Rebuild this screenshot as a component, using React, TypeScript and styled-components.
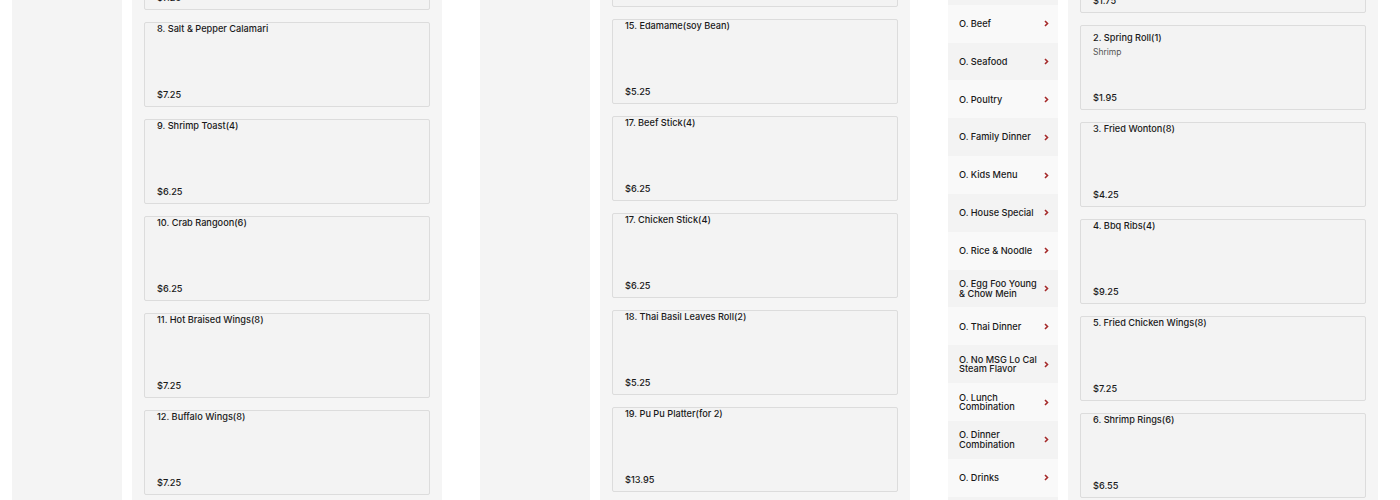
import React from "react";
import styled, { createGlobalStyle } from "styled-components";

const Global = createGlobalStyle`
  html, body { margin: 0; padding: 0; background: #ffffff; }
  body { height: 500px; overflow: hidden; font-family: Inter, "Noto Sans", sans-serif; color: #222; }
`;

const Page = styled.div`
  display: flex;
  gap: 38px;
  padding-left: 12px;
  height: 500px;
  overflow: hidden;
`;

const Block = styled.div`
  display: flex;
  gap: 10px;
  flex: 0 0 430px;
  height: 500px;
  overflow: hidden;
`;

const Sidebar = styled.div`
  flex: 0 0 110px;
  background: #f4f4f4;
  overflow: hidden;
`;

const CatList = styled.div<{ $offset: number }>`
  display: flex;
  flex-direction: column;
  margin-top: ${(p) => p.$offset}px;
`;

const CatRow = styled.div<{ $light: boolean }>`
  height: 37.83px;
  box-sizing: border-box;
  display: flex;
  align-items: center;
  justify-content: space-between;
  padding: 0 9px 0 11px;
  background: ${(p) => (p.$light ? "#f9f9f9" : "#f3f3f3")};
`;

const CatLabel = styled.span`
  font-size: 9.2px;
  font-weight: 500;
  line-height: 9.5px;
  color: #1a1a1a;
  width: 80px;
`;

const Panel = styled.div`
  flex: 0 0 310px;
  background: #f5f5f5;
  padding: 0 12px;
  box-sizing: border-box;
  overflow: hidden;
`;

const CardList = styled.div<{ $offset: number }>`
  display: flex;
  flex-direction: column;
  gap: 12px;
  margin-top: ${(p) => p.$offset}px;
`;

const Card = styled.div<{ $withDesc: boolean }>`
  height: 85px;
  box-sizing: border-box;
  border: 1px solid #dcdcdc;
  border-radius: 2px;
  background: #f3f3f3;
  padding: ${(p) => (p.$withDesc ? "6px" : "0")} 12px 5px 12px;
  display: flex;
  flex-direction: column;
`;

const Title = styled.div`
  font-size: 9.2px;
  font-weight: 500;
  line-height: 11px;
  color: #1a1a1a;
`;

const Desc = styled.div`
  font-size: 8.5px;
  line-height: 11px;
  color: #555;
  margin-top: 4px;
`;

const Price = styled.div`
  margin-top: auto;
  font-size: 9.2px;
  font-weight: 500;
  line-height: 12px;
  color: #1a1a1a;
`;

const Chevron = () => (
  <svg width="5" height="7" viewBox="0 0 5 7">
    <path d="M1 1 L3.5 3.5 L1 6" fill="none" stroke="#a52a2a" strokeWidth="1.6" />
  </svg>
);

type Item = { name: string; price: string; desc?: string };

const col1: Item[] = [
  { name: "7. Fried Dumplings(6)", price: "$7.25" },
  { name: "8. Salt & Pepper Calamari", price: "$7.25" },
  { name: "9. Shrimp Toast(4)", price: "$6.25" },
  { name: "10. Crab Rangoon(6)", price: "$6.25" },
  { name: "11. Hot Braised Wings(8)", price: "$7.25" },
  { name: "12. Buffalo Wings(8)", price: "$7.25" },
];

const col2: Item[] = [
  { name: "14. Steamed Dumplings(6)", price: "$7.25" },
  { name: "15. Edamame(soy Bean)", price: "$5.25" },
  { name: "17. Beef Stick(4)", price: "$6.25" },
  { name: "17. Chicken Stick(4)", price: "$6.25" },
  { name: "18. Thai Basil Leaves Roll(2)", price: "$5.25" },
  { name: "19. Pu Pu Platter(for 2)", price: "$13.95" },
];

const col3: Item[] = [
  { name: "1. Egg Roll(1)", price: "$1.75" },
  { name: "2. Spring Roll(1)", price: "$1.95", desc: "Shrimp" },
  { name: "3. Fried Wonton(8)", price: "$4.25" },
  { name: "4. Bbq Ribs(4)", price: "$9.25" },
  { name: "5. Fried Chicken Wings(8)", price: "$7.25" },
  { name: "6. Shrimp Rings(6)", price: "$6.55" },
];

const cats = [
  "O. Pork",
  "O. Beef",
  "O. Seafood",
  "O. Poultry",
  "O. Family Dinner",
  "O. Kids Menu",
  "O. House Special",
  "O. Rice & Noodle",
  "O. Egg Foo Young & Chow Mein",
  "O. Thai Dinner",
  "O. No MSG Lo Cal Steam Flavor",
  "O. Lunch Combination",
  "O. Dinner Combination",
  "O. Drinks",
  "O. Sides",
];

const Cards = ({ items, offset }: { items: Item[]; offset: number }) => (
  <CardList $offset={offset}>
    {items.map((it, i) => (
      <Card key={i} $withDesc={!!it.desc}>
        <Title>{it.name}</Title>
        {it.desc && <Desc>{it.desc}</Desc>}
        <Price>{it.price}</Price>
      </Card>
    ))}
  </CardList>
);

export default function App() {
  return (
    <>
      <Global />
      <Page>
        <Block>
          <Sidebar />
          <Panel>
            <Cards items={col1} offset={-75} />
          </Panel>
        </Block>
        <Block>
          <Sidebar />
          <Panel>
            <Cards items={col2} offset={-78} />
          </Panel>
        </Block>
        <Block>
          <Sidebar>
            <CatList $offset={-33}>
              {cats.map((c, i) => (
                <CatRow key={i} $light={i % 2 === 1}>
                  <CatLabel>{c}</CatLabel>
                  <Chevron />
                </CatRow>
              ))}
            </CatList>
          </Sidebar>
          <Panel>
            <Cards items={col3} offset={-72} />
          </Panel>
        </Block>
      </Page>
    </>
  );
}
